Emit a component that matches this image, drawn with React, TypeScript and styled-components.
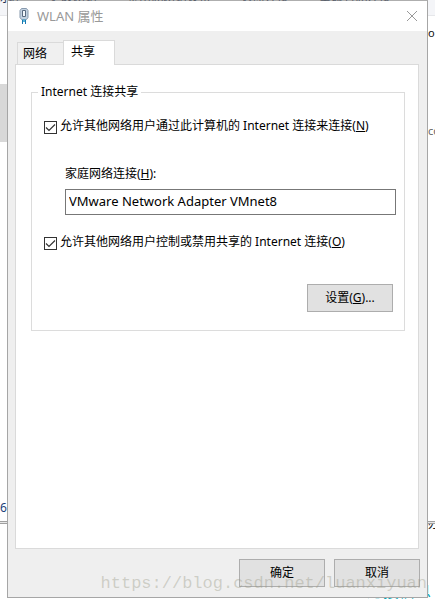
import React, { useState } from 'react';
import styled, { createGlobalStyle } from 'styled-components';

const uiFont = '"Noto Sans", "Noto Sans CJK SC", sans-serif';

const GlobalStyle = createGlobalStyle`
  * { box-sizing: border-box; }
  body { margin: 0; background: #fff; font-family: ${uiFont}; font-size: 12px; line-height: 16px; color: #000; overflow: hidden; }
  button, input { font: inherit; color: inherit; }
`;

const Desktop = styled.main`
  position: relative;
  display: grid;
  grid-template-columns: 7px minmax(0, 1fr) 7px;
  height: 100vh;
  padding-bottom: 7px;
  overflow: hidden;
`;

const Sliver = styled.div<{ $top: string }>`
  display: flex;
  flex-direction: column;
  overflow: hidden;
  white-space: nowrap;
  background: linear-gradient(#f4f5f8 15px, #e6e7ea 15px, #e6e7ea 16px, transparent 16px);
  padding-top: ${(p) => p.$top};
`;

const GreyBlock = styled.div`
  flex: none;
  height: 58px;
  background: #d8d8d8;
`;

const Fragment = styled.span<{ $gap: number; $color: string; $size?: number; $height?: number }>`
  display: flex;
  align-items: flex-end;
  flex: none;
  margin-top: ${(p) => p.$gap}px;
  height: ${(p) => p.$height ?? 16}px;
  overflow: hidden;
  color: ${(p) => p.$color};
  font-size: ${(p) => p.$size ?? 12}px;
`;

const Rule = styled.div<{ $gap: number }>`
  margin-top: ${(p) => p.$gap}px;
  flex: none;
  height: 3px;
  border: solid #a0a0a0;
  border-width: 1px 0;
  background: #e8e8e8;
`;

const PageMenu = styled.div`
  position: absolute;
  z-index: 1;
  top: -10px;
  left: -5px;
  right: 0;
  display: flex;
  gap: 30px;
  color: #1e3250;
  white-space: nowrap;
`;

const PageHeading = styled.span`
  position: absolute;
  right: 4px;
  bottom: 4px;
  color: #00a8b8;
  font-size: 16px;
  line-height: 20px;
`;

const Dialog = styled.section`
  position: relative;
  z-index: 2;
  display: flex;
  flex-direction: column;
  min-width: 0;
  border: 1px solid #a6a6a6;
  border-top-color: rgba(120, 120, 120, 0.6);
  background: #efefef;
  background-clip: padding-box;
`;

const TitleBar = styled.header`
  display: flex;
  align-items: center;
  flex: none;
  height: 30px;
  padding: 0 9px 0 10px;
  gap: 7px;
  background: #fff;
  color: #999;
`;

const Title = styled.h1`
  flex: 1;
  margin: 0;
  font-size: 13px;
  font-weight: 400;
`;

const CloseButton = styled.button`
  display: flex;
  padding: 0;
  border: 0;
  background: none;
`;

const Tabs = styled.div`
  display: flex;
  align-items: flex-end;
  flex: none;
  height: 33px;
  padding-left: 9px;
`;

const Tab = styled.button<{ $active?: boolean }>`
  position: relative;
  width: ${(p) => (p.$active ? 52 : 47)}px;
  height: ${(p) => (p.$active ? 25 : 22)}px;
  margin-bottom: ${(p) => (p.$active ? -1 : 0)}px;
  margin-left: ${(p) => (p.$active ? -1 : 0)}px;
  padding: ${(p) => (p.$active ? '0 7px 2px' : '0 5px')};
  border: 1px solid #dadada;
  border-bottom: 0;
  background: ${(p) => (p.$active ? '#fff' : '#f0f0f0')};
  text-align: left;
`;

const Panel = styled.div`
  flex: 1;
  margin: 0 8px 0 7px;
  padding: 19px 13px 0 15px;
  border: 1px solid #dadada;
  background: #fff;
`;

const Group = styled.fieldset`
  display: flex;
  flex-direction: column;
  min-width: 0;
  margin: 0;
  padding: 18px 8px 18px 12px;
  border: 1px solid #dcdcdc;
`;

const Legend = styled.legend`
  margin-left: -6px;
  padding: 0 3px;
`;

const CheckRow = styled.label`
  display: flex;
  align-items: center;
  gap: 3px;
  white-space: nowrap;
`;

const Check = styled.input`
  appearance: none;
  flex: none;
  width: 13px;
  height: 13px;
  margin: 2px 0 0;
  border: 1px solid #333;
  background: #fff;
  &:checked {
    background: #fff url("data:image/svg+xml,%3Csvg xmlns='http://www.w3.org/2000/svg' viewBox='0 0 11 11'%3E%3Cpath d='M1 5.5L4 8.500L10 2.500' fill='none' stroke='%23333' stroke-width='1.2'/%3E%3C/svg%3E");
  }
`;

const Field = styled.div`
  display: flex;
  flex-direction: column;
  gap: 7px;
  margin: 32px 0 19px 21px;
`;

const TextBox = styled.input`
  width: 100%;
  height: 26px;
  padding: 0 3px 2px;
  border: 1px solid #777;
  background: #fff;
  font-size: 13px;
`;

const PushButton = styled.button`
  width: 86px;
  height: 28px;
  padding: 0;
  border: 1px solid #adadad;
  background: #e1e1e1;
`;

const GroupActions = styled.div`
  display: flex;
  justify-content: flex-end;
  margin: 34px 3px 0 0;
`;

const Footer = styled.footer`
  display: flex;
  justify-content: flex-end;
  flex: none;
  gap: 9px;
  height: 48px;
  padding: 10px 7px 0 0;
`;

const Watermark = styled.span`
  position: absolute;
  z-index: 3;
  right: 8px;
  bottom: 9px;
  color: rgba(150, 150, 130, 0.38);
  font: 17px/24px "Liberation Mono", monospace;
  pointer-events: none;
`;

function AdapterIcon() {
  return (
    <svg width="12" height="18" viewBox="0 0 12 18" aria-hidden="true">
      <path d="M3.500 1.500h5l1.500 2v7L8.500 12.500h-5L2 10.500v-7z" fill="#c4d3e2" stroke="#8799ad" />
      <path d="M4.500 3.500h3v6h-3z" fill="#f4f8fc" stroke="#5a6b80" />
      <path d="M4 12.500h4v2.500H4z" fill="#55b4dc" />
      <path d="M4.500 13v4M7.500 13v4" stroke="#1b78ae" />
    </svg>
  );
}

export default function App() {
  const [allow, setAllow] = useState(true);
  const [control, setControl] = useState(true);
  const [network, setNetwork] = useState('VMware Network Adapter VMnet8');
  return (
    <>
      <GlobalStyle />
      <Desktop>
        <PageMenu aria-hidden="true">
          <span>网络</span>
          <span>更改网络</span>
          <span>禁用此网络设备</span>
          <span>诊断连接</span>
          <span>重命名此连接</span>
        </PageMenu>
        <PageHeading>：连接信息</PageHeading>
        <Sliver $top="84px">
          <GreyBlock />
          <Fragment $gap={358} $color="#1b3f7a">6</Fragment>
          <Rule $gap={5} />
        </Sliver>
        <Dialog aria-label="WLAN 属性">
          <TitleBar>
            <AdapterIcon />
            <Title>WLAN 属性</Title>
            <CloseButton aria-label="关闭">
              <svg width="12" height="12" viewBox="0 0 12 12"><path d="M1 1l10 10M11 1L1 11" stroke="#999" /></svg>
            </CloseButton>
          </TitleBar>
          <Tabs role="tablist">
            <Tab role="tab" aria-selected={false}>网络</Tab>
            <Tab role="tab" aria-selected $active>共享</Tab>
          </Tabs>
          <Panel role="tabpanel">
            <Group>
              <Legend>Internet 连接共享</Legend>
              <CheckRow>
                <Check type="checkbox" checked={allow} onChange={(e) => setAllow(e.target.checked)} />
                <span>允许其他网络用户通过此计算机的 Internet 连接来连接(<u>N</u>)</span>
              </CheckRow>
              <Field>
                <label htmlFor="home-network">家庭网络连接(<u>H</u>):</label>
                <TextBox id="home-network" value={network} onChange={(e) => setNetwork(e.target.value)} />
              </Field>
              <CheckRow>
                <Check type="checkbox" checked={control} onChange={(e) => setControl(e.target.checked)} />
                <span>允许其他网络用户控制或禁用共享的 Internet 连接(<u>O</u>)</span>
              </CheckRow>
              <GroupActions>
                <PushButton>设置(<u>G</u>)...</PushButton>
              </GroupActions>
            </Group>
          </Panel>
          <Footer>
            <PushButton>确定</PushButton>
            <PushButton>取消</PushButton>
          </Footer>
        </Dialog>
        <Sliver $top="25px">
          <Fragment $gap={0} $color="#111" $size={11}>or</Fragment>
          <Fragment $gap={82} $color="#666" $size={11}>co</Fragment>
          <Rule $gap={382} />
          <Fragment $gap={0} $color="#222" $height={8}>办</Fragment>
        </Sliver>
        <Watermark>https://blog.csdn.net/luanxiyuan</Watermark>
      </Desktop>
    </>
  );
}
